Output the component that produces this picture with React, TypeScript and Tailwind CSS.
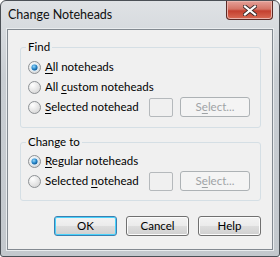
import React from "react";

// ---------------------------------------------------------------------------
// Small drawings
// ---------------------------------------------------------------------------

function Radio({ checked = false }: { checked?: boolean }) {
  return (
    <svg width="13" height="13" viewBox="0 0 13 13" aria-hidden="true" className="shrink-0">
      <defs>
        <radialGradient id="rOff" cx="0.35" cy="0.3" r="0.8">
          <stop offset="0" stopColor="#ffffff" />
          <stop offset="1" stopColor="#d4d4d4" />
        </radialGradient>
        <radialGradient id="rOn" cx="0.4" cy="0.35" r="0.7">
          <stop offset="0" stopColor="#9ad6f5" />
          <stop offset="0.55" stopColor="#2a8ccf" />
          <stop offset="1" stopColor="#0d4c85" />
        </radialGradient>
      </defs>
      <circle cx="6.5" cy="6.5" r="6" fill="url(#rOff)" stroke="#8d9194" strokeWidth="1" />
      {checked && (
        <>
          <circle cx="6.5" cy="6.5" r="4" fill="#d8ecf8" />
          <circle cx="6.5" cy="6.5" r="3" fill="url(#rOn)" />
        </>
      )}
    </svg>
  );
}

function CloseGlyph() {
  return (
    <svg width="14" height="11" viewBox="0 0 14 11" aria-hidden="true">
      <path
        d="M2 1.5 L12 9.5 M12 1.5 L2 9.5"
        stroke="#3b2b2b"
        strokeWidth="4"
        strokeLinecap="square"
      />
      <path
        d="M2 1.5 L12 9.5 M12 1.5 L2 9.5"
        stroke="#ffffff"
        strokeWidth="2.2"
        strokeLinecap="square"
      />
    </svg>
  );
}

// ---------------------------------------------------------------------------
// Controls
// ---------------------------------------------------------------------------

function RadioRow({
  checked,
  children,
  picker = false,
}: {
  checked?: boolean;
  children: React.ReactNode;
  picker?: boolean;
}) {
  return (
    <div className="flex h-[20px] items-center">
      <div className="flex flex-1 items-center gap-[4px] pl-[7px]">
        <Radio checked={checked} />
        <span className="whitespace-nowrap leading-none">{children}</span>
      </div>
      {picker && (
        <div className="flex items-center gap-[7px] pr-[10px]">
          <div className="h-[19px] w-[24px] rounded-[2px] border border-[#b5b9bc] bg-[#f0f0f0]" />
          <div className="flex h-[20px] w-[70px] items-center justify-center rounded-[3px] border border-[#adb2b5] bg-[#f4f4f4] text-[#9fa3a6]">
            S<u className="underline-offset-2">e</u>lect...
          </div>
        </div>
      )}
    </div>
  );
}

function Group({
  title,
  className = "",
  children,
}: {
  title: string;
  className?: string;
  children: React.ReactNode;
}) {
  return (
    <div
      className={[
        "relative w-[241px] rounded-[3px] border border-[#d5dfe5]",
        className,
      ].join(" ")}
    >
      <span className="absolute -top-[9px] left-[5px] bg-[#f0f0f0] px-[2px] leading-[16px]">
        {title}
      </span>
      {children}
    </div>
  );
}

function Button({
  children,
  isDefault = false,
}: {
  children: React.ReactNode;
  isDefault?: boolean;
}) {
  return (
    <div
      className={[
        "flex h-[20px] w-[63px] items-center justify-center rounded-[3px] border bg-[linear-gradient(#f3f3f3_0%,#ebebeb_48%,#dddddd_52%,#cfcfcf_100%)]",
        isDefault
          ? "border-[#3c7fb1] shadow-[inset_0_0_0_1px_#48d2fb]"
          : "border-[#707070] shadow-[inset_0_0_0_1px_#fcfcfc]",
      ].join(" ")}
    >
      {children}
    </div>
  );
}

// ---------------------------------------------------------------------------
// Dialog
// ---------------------------------------------------------------------------

export default function App() {
  return (
    <div
      className="flex h-[257px] w-[280px] flex-col overflow-hidden rounded-t-[6px] rounded-b-[3px] border border-[#4b5056] bg-[linear-gradient(#dfe2e5,#c9ced3_30%,#c3c8cd)] text-[11.5px] text-black"
      style={{ fontFamily: 'Lato, "Liberation Sans", sans-serif' }}
    >
      {/* Title bar */}
      <div className="flex h-[28px] shrink-0 items-start justify-between">
        <span className="whitespace-nowrap pl-[7px] pt-[6px] text-[12.5px] leading-[16px] text-[#111]">
          Change Noteheads
        </span>
        <div className="mr-[6px] flex h-[19px] w-[47px] items-center justify-center rounded-b-[4px] border border-t-0 border-[#5a2a26] bg-[linear-gradient(#e5a199,#d47466_45%,#c4402f_55%,#d96b55)] shadow-[inset_0_0_0_1px_#eab3ab]">
          <CloseGlyph />
        </div>
      </div>

      {/* Client area */}
      <div className="mx-[6px] mb-[6px] flex flex-1 flex-col border border-[#838a91] bg-[#f0f0f0] px-[12px] shadow-[0_0_0_1px_#e9ecee]">
        <Group title="Find" className="mt-[17px] pb-[10px] pt-[9px]">
          <RadioRow checked>
            <u className="underline-offset-2">A</u>ll noteheads
          </RadioRow>
          <RadioRow>
            All <u className="underline-offset-2">c</u>ustom noteheads
          </RadioRow>
          <RadioRow picker>
            <u className="underline-offset-2">S</u>elected notehead
          </RadioRow>
        </Group>

        <Group title="Change to" className="mt-[14px] pb-[9px] pt-[8px]">
          <RadioRow checked>
            <u className="underline-offset-2">R</u>egular noteheads
          </RadioRow>
          <RadioRow picker>
            Selected <u className="underline-offset-2">n</u>otehead
          </RadioRow>
        </Group>

        <div className="mt-[15px] flex w-[241px] justify-end gap-[9px]">
          <Button isDefault>OK</Button>
          <Button>Cancel</Button>
          <Button>Help</Button>
        </div>
      </div>
    </div>
  );
}
